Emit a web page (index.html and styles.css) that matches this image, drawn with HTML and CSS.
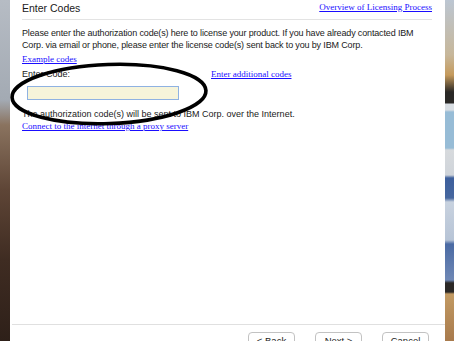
FILE: index.html
```html
<!DOCTYPE html>
<html lang="en">
  <head>
    <meta charset="UTF-8" />
    <meta name="viewport" content="width=device-width, initial-scale=1.0" />
    <title>Enter Codes</title>
    <link rel="stylesheet" href="styles.css">
  </head>
  <body>
    <div class="desktop">
      <div class="strip left"></div>

      <section class="dialog">
        <div class="head">
          <span class="title">Enter Codes</span>
          <a href="#">Overview of Licensing Process</a>
        </div>

        <div class="content">
          <p class="intro">
            Please enter the authorization code(s) here to license your product. If you have already contacted IBM
            Corp. via email or phone, please enter the license code(s) sent back to you by IBM Corp.
          </p>
          <a href="#" class="example">Example codes</a>

          <div class="code-row">
            <span class="label">Enter Code:</span>
            <a href="#">Enter additional codes</a>
          </div>
          <input type="text" class="code" />

          <p class="note">The authorization code(s) will be sent to IBM Corp. over the Internet.</p>
          <a href="#">Connect to the internet through a proxy server</a>

          <!-- hand drawn circle someone put over the field -->
          <svg class="scribble" width="206" height="70" viewBox="0 0 206 70">
            <ellipse cx="102" cy="35" rx="97" ry="29.5" fill="none" stroke="#000" stroke-width="3.6" transform="rotate(-2 102 35)" />
          </svg>
        </div>

        <div class="foot">
          <button>&lt; Back</button>
          <button>Next &gt;</button>
          <button>Cancel</button>
        </div>
      </section>

      <div class="strip right"></div>
    </div>
  </body>
</html>
```

FILE: styles.css
```css
body {
  margin: 0;
  overflow: hidden;
  font-family: "Liberation Sans", Arial, sans-serif;
}
.desktop {
  display: flex;
  height: 341px;
  overflow: hidden;
}
.strip {
  width: 9px;
  flex: none;
}
.strip.left {
  width: 10px;
  background: linear-gradient(
    #b6bcc4 0,
    #a3aab3 100px,
    #8a735f 125px,
    #5e4536 190px,
    #3f2c22 260px,
    #2e2019 341px
  );
}
.strip.right {
  background: linear-gradient(
    #bcc6d2 0,
    #c7b79a 55px,
    #c59a5c 75px,
    #2a2826 92px,
    #2a2826 103px,
    #d8dde2 104px,
    #d8dde2 110px,
    #97bcd6 112px,
    #97bcd6 148px,
    #d7dadd 150px,
    #cfd4da 175px,
    #3d5f9c 178px,
    #46679f 198px,
    #c8d2df 202px,
    #b7c4d6 240px,
    #4a6aa3 244px,
    #6f88b5 280px,
    #2b2826 283px,
    #2b2826 292px,
    #c29a63 294px,
    #a87a4c 341px
  );
}
.dialog {
  flex: 1;
  background: #fff;
  display: flex;
  flex-direction: column;
}
.head {
  display: flex;
  justify-content: space-between;
  align-items: flex-start;
  margin: 0 13px 0 12px;
  height: 19px;
  border-bottom: 1px solid #e3e3e3;
}
.title {
  font-size: 10.5px;
  color: #1a1a1a;
  padding-top: 2px;
}
a {
  font-family: "Liberation Serif", "Times New Roman", serif;
  font-size: 9px;
  color: #1a0dff;
  text-decoration: underline;
}
.head a {
  padding-top: 2px;
}
.content {
  flex: 1;
  position: relative;
  padding: 8px 0 0 12px;
  font-size: 9px;
  color: #1a1a1a;
}
.intro {
  margin: 0;
  line-height: 11.5px;
  letter-spacing: -0.15px;
  width: 410px;
}
.example {
  display: inline-block;
  margin-top: 3px;
}
.code-row {
  display: flex;
  align-items: baseline;
  margin-top: 5px;
}
.code-row .label {
  width: 189px;
}
.code {
  display: block;
  margin: 7px 0 0 5px;
  width: 150px;
  height: 12px;
  padding: 0;
  border: 1px solid #8fb2e2;
  background: #f6f4da;
  outline: none;
}
.note {
  margin: 8px 0 1px;
  line-height: 12px;
}
.scribble {
  position: absolute;
  left: -3px;
  top: 39px;
}
.foot {
  display: flex;
  justify-content: flex-end;
  gap: 20px;
  margin-left: 2px;
  padding: 7px 16px 0 0;
  height: 9px;
  border-top: 1px solid #e0e0e0;
}
button {
  -webkit-appearance: none;
  width: 47px;
  height: 16px;
  border: 1px solid #c2c2c2;
  border-radius: 4px;
  background: #fff;
  font-family: "Liberation Sans", Arial, sans-serif;
  font-size: 9.5px;
  color: #222;
  padding: 0;
}
```
